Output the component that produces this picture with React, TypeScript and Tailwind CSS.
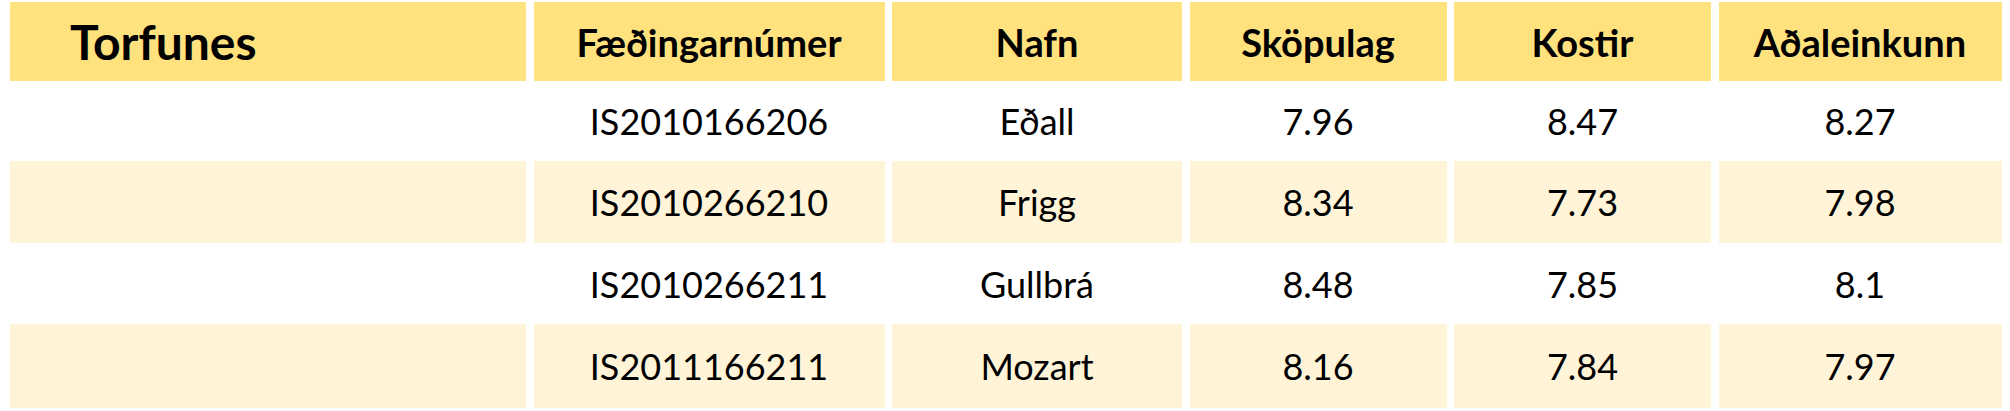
// Torfunes – kynbótadómar, tafla í Excel-stíl

const COLS = ["Fæðingarnúmer", "Nafn", "Sköpulag", "Kostir", "Aðaleinkunn"];

const ROWS = [
  { nr: "IS2010166206", nafn: "Eðall", skop: "7.96", kostir: "8.47", adal: "8.27", h: "h-[80px]" },
  { nr: "IS2010266210", nafn: "Frigg", skop: "8.34", kostir: "7.73", adal: "7.98", h: "h-[82px]" },
  { nr: "IS2010266211", nafn: "Gullbrá", skop: "8.48", kostir: "7.85", adal: "8.1", h: "h-[81px]" },
  { nr: "IS2011166211", nafn: "Mozart", skop: "8.16", kostir: "7.84", adal: "7.97", h: "h-[84px]" },
];

const grid = "grid grid-cols-[516px_351px_290px_257px_257px_283px] gap-x-[7.5px]";

export default function App() {
  return (
    <div className="h-[411px] w-[2010px] bg-white pl-[10px] pt-[2px] text-black" style={{ fontFamily: "Lato, 'Open Sans', sans-serif" }}>
      {/* Haus */}
      <div className={`${grid} h-[79px]`}>
        <div className="flex items-center bg-[#FFE17D] pl-[60px] pt-[1px] text-[48px] font-bold leading-none">
          Torfunes
        </div>
        {COLS.map((c) => (
          <div key={c} className="flex items-center justify-center bg-[#FFE17D] text-[38px] font-bold leading-none">
            {c}
          </div>
        ))}
      </div>

      {/* Hross */}
      {ROWS.map((r, i) => {
        const bg = i % 2 === 1 ? "bg-[#FFF4D7]" : "bg-white";
        const cells = [r.nr, r.nafn, r.skop, r.kostir, r.adal];
        return (
          <div key={r.nr} className={`${grid} ${r.h}`}>
            <div className={bg} />
            {cells.map((v, j) => (
              <div key={j} className={`flex items-center justify-center ${bg} text-[36px] leading-none`}>
                {v}
              </div>
            ))}
          </div>
        );
      })}
    </div>
  );
}
